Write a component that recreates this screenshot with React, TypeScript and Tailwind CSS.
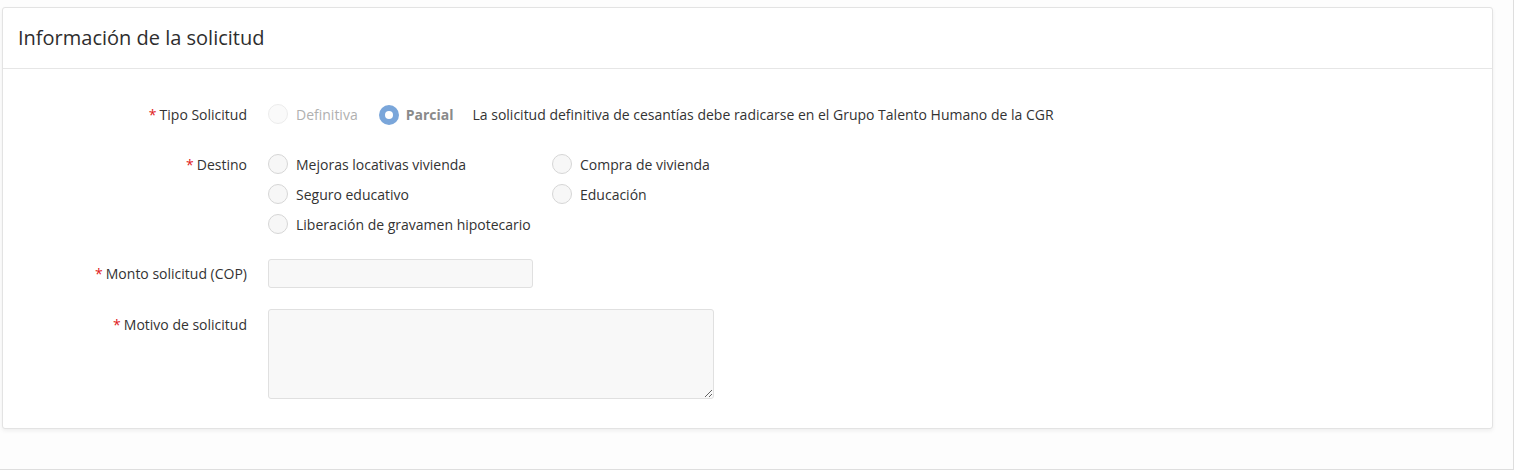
import React from 'react';

const font = { fontFamily: '"Open Sans", "Noto Sans", sans-serif' };

function Radio({ checked, disabled }: { checked?: boolean; disabled?: boolean }) {
  if (checked) {
    return (
      <span className="inline-flex h-5 w-5 shrink-0 items-center justify-center rounded-full bg-[#7aa6da]">
        <span className="h-2 w-2 rounded-full bg-white" />
      </span>
    );
  }
  return (
    <span
      className={
        disabled
          ? 'inline-block h-5 w-5 shrink-0 rounded-full border border-[#ececec] bg-[#fafafa]'
          : 'inline-block h-5 w-5 shrink-0 rounded-full border border-[#d6d6d6] bg-[#f7f7f7]'
      }
    />
  );
}

function Label({ children }: { children: React.ReactNode }) {
  return (
    <div className="w-[244px] shrink-0 text-right text-[14px] text-[#333]">
      <span className="mr-[3px] text-[#e02020]">*</span>
      {children}
    </div>
  );
}

function Option({ text }: { text: string }) {
  return (
    <label className="flex h-[30px] items-center gap-2 text-[14px] text-[#333]">
      <Radio />
      <span>{text}</span>
    </label>
  );
}

export default function App() {
  return (
    <div className="h-[474px] w-full overflow-hidden bg-white" style={font}>
      <div className="h-[470px] w-[1514px] border-r border-b border-[#dedede] bg-[#fdfdfd] pt-[7px] pl-[2px]">
        <div className="h-[422px] w-[1491px] rounded-[3px] border border-[#e3e3e3] bg-white shadow-[0_2px_4px_rgba(0,0,0,0.06)]">
          <div className="flex h-[61px] items-center border-b border-[#e6e6e6] px-[15px]">
            <h2 className="text-[20px] text-[#2e2e2e]">Información de la solicitud</h2>
          </div>

          <div className="pt-[35px]">
            <div className="flex h-[20px] items-center gap-[21px]">
              <Label>Tipo Solicitud</Label>
              <div className="flex items-center text-[14px]">
                <Radio disabled />
                <span className="ml-2 text-[#b0b0b0]">Definitiva</span>
                <span className="ml-[21px]">
                  <Radio checked />
                </span>
                <span className="ml-[7px] font-bold text-[#8a8a8a]">Parcial</span>
                <span className="ml-[19px] text-[#333]">
                  La solicitud definitiva de cesantías debe radicarse en el Grupo Talento Humano de la CGR
                </span>
              </div>
            </div>

            <div className="mt-[25px] flex gap-[21px]">
              <div className="flex h-[30px] items-center">
                <Label>Destino</Label>
              </div>
              <div className="grid w-[460px] grid-cols-[284px_1fr]">
                <Option text="Mejoras locativas vivienda" />
                <Option text="Compra de vivienda" />
                <Option text="Seguro educativo" />
                <Option text="Educación" />
                <Option text="Liberación de gravamen hipotecario" />
              </div>
            </div>

            <div className="mt-[20px] flex items-center gap-[21px]">
              <Label>Monto solicitud (COP)</Label>
              <input className="h-[29px] w-[265px] rounded-[3px] border border-[#e0e0e0] bg-[#f8f8f8] outline-none" />
            </div>

            <div className="mt-[21px] flex gap-[21px]">
              <div className="pt-[5px]">
                <Label>Motivo de solicitud</Label>
              </div>
              <textarea className="h-[90px] w-[446px] rounded-[3px] border border-[#e0e0e0] bg-[#f8f8f8] outline-none" />
            </div>
          </div>
        </div>
      </div>
    </div>
  );
}
